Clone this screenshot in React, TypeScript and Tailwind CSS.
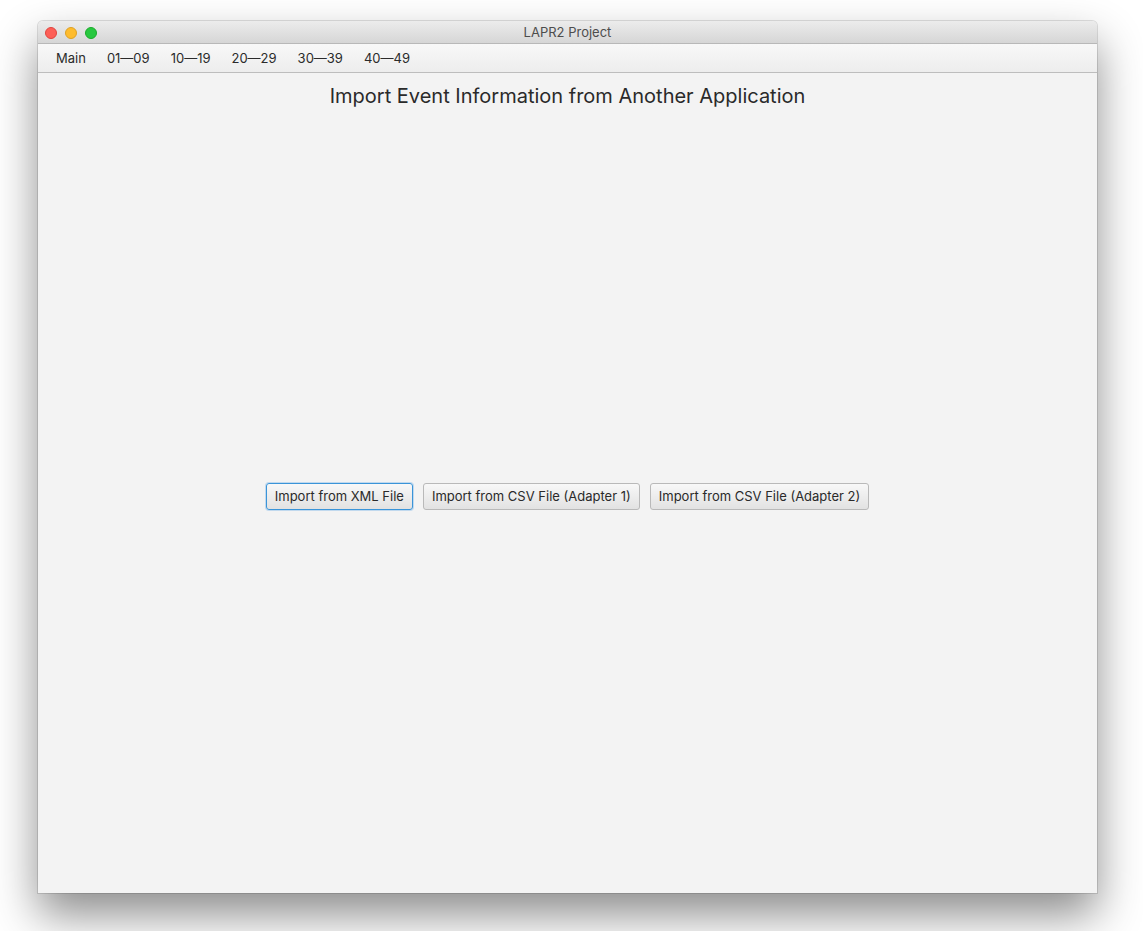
import React from "react";

export default function App() {
  const menus = ["Main", "01\u201409", "10\u201419", "20\u201429", "30\u201439", "40\u201449"];
  return (
    <div className="w-[1143px] h-[931px] bg-white overflow-hidden pt-[21px] pl-[38px]" style={{ fontFamily: "Inter, 'Open Sans', sans-serif" }}>
      <div className="w-[1059px] h-[872px] flex flex-col bg-[#f3f3f3] rounded-t-[5px] shadow-[0_22px_45px_rgba(0,0,0,0.45),0_0_0_1px_rgba(0,0,0,0.12)]">
        <div className="relative h-[23px] flex items-center pt-[2px] rounded-t-[5px] bg-gradient-to-b from-[#ececec] to-[#d6d6d6] border-b border-[#b8b8b8]">
          <div className="flex gap-[8px] pl-[7px]">
            <div className="w-[12px] h-[12px] rounded-full bg-[#fd5f57] border border-[#e0443e]" />
            <div className="w-[12px] h-[12px] rounded-full bg-[#febc2e] border border-[#dea123]" />
            <div className="w-[12px] h-[12px] rounded-full bg-[#28c840] border border-[#1aab29]" />
          </div>
          <div className="absolute inset-0 pt-[2px] flex items-center justify-center text-[13px] text-[#4d4d4d]">LAPR2 Project</div>
        </div>
        <div className="h-[29px] flex items-center pt-[1px] gap-[21px] pl-[18px] bg-gradient-to-b from-[#f8f8f8] to-[#ededed] border-b border-[#bdbdbd] text-[13px] text-[#2b2b2b]">
          {menus.map((m) => (
            <span key={m}>{m}</span>
          ))}
        </div>
        <div className="flex-1 flex flex-col items-center">
          <div className="mt-[10px] text-[20px] text-[#2a2a2a] leading-[26px]">Import Event Information from Another Application</div>
          <div className="flex-1 flex items-center justify-center gap-[10px] pb-[9px]">
            <button className="h-[27px] px-[8px] rounded-[3px] text-[13px] text-[#2a2a2a] bg-gradient-to-b from-[#f8f8f8] to-[#e2e2e2] border border-[#3a94d8] shadow-[0_0_0_1px_rgba(100,170,230,0.35)]">Import from XML File</button>
            <button className="h-[27px] px-[8px] rounded-[3px] text-[13px] text-[#2a2a2a] bg-gradient-to-b from-[#f8f8f8] to-[#e2e2e2] border border-[#b9b9b9]">Import from CSV File (Adapter 1)</button>
            <button className="h-[27px] px-[8px] rounded-[3px] text-[13px] text-[#2a2a2a] bg-gradient-to-b from-[#f8f8f8] to-[#e2e2e2] border border-[#b9b9b9]">Import from CSV File (Adapter 2)</button>
          </div>
        </div>
      </div>
    </div>
  );
}
